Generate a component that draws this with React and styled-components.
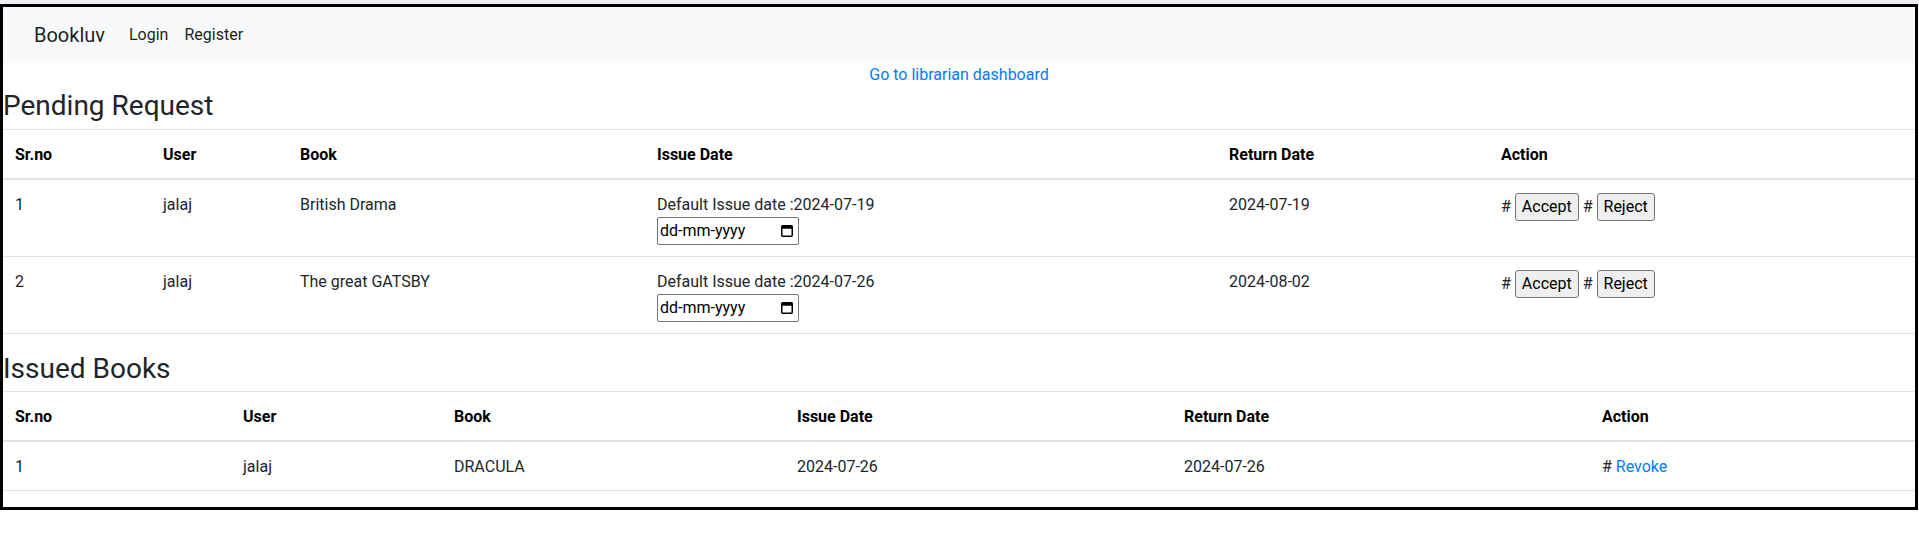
import React from 'react';
import styled, { createGlobalStyle } from 'styled-components';

const GlobalStyle = createGlobalStyle`
  body {
    margin: 0;
    font-family: Roboto, "Liberation Sans", sans-serif;
    font-size: 16px;
    line-height: 1.5;
    color: #212529;
    background: #fff;
  }
`;

const Page = styled.div`
  border-top: 4px solid #f1f0f7;
`;
const Frame = styled.div`
  width: 1918px;
  box-sizing: border-box;
  border: 3px solid #000;
`;
const Navbar = styled.nav`
  background-color: #f8f9fa;
  padding: 8px 16px;
`;
const NavInner = styled.div`
  display: flex;
  align-items: center;
  padding: 0 15px;
`;
const Brand = styled.a`
  font-size: 20px;
  line-height: 30px;
  padding: 5px 0;
  margin-right: 16px;
  color: rgba(0, 0, 0, 0.9);
  text-decoration: none;
`;
const NavLink = styled.a`
  padding: 8px;
  color: rgba(0, 0, 0, 0.9);
  text-decoration: none;
`;
const Center = styled.div`
  text-align: center;
`;
const BlueLink = styled.a`
  color: #007bff;
  text-decoration: none;
  cursor: pointer;
`;
const Title = styled.h3`
  font-size: 28px;
  font-weight: 400;
  line-height: 1.2;
  margin: 0 0 6px;
  padding-top: 2px;
`;
const Table = styled.table`
  width: 100%;
  table-layout: fixed;
  border-collapse: collapse;
  margin-bottom: 16px;
`;
const Th = styled.th`
  box-sizing: border-box;
  width: ${(p) => p.w}px;
  padding: 13px 12px 11px;
  text-align: left;
  vertical-align: bottom;
  font-weight: 700;
  color: #000;
  border-top: 1px solid #dee2e6;
  border-bottom: 2px solid #dee2e6;
`;
const Td = styled.td`
  padding: 13px 12px 11px;
  vertical-align: top;
  border-top: 1px solid #dee2e6;
  border-bottom: 1px solid #dee2e6;
`;
const DateBox = styled.label`
  display: flex;
  align-items: center;
  justify-content: space-between;
  width: 142px;
  height: 28px;
  box-sizing: border-box;
  padding: 0 5px 0 2px;
  border: 1px solid #767676;
  border-radius: 2px;
  color: #000;
`;
const Button = styled.button`
  font-family: inherit;
  font-size: 16px;
  line-height: 24px;
  padding: 1px 6px;
  color: #000;
  background: #efefef;
  border: 1px solid #767676;
  border-radius: 3px;
`;

const CalendarIcon = () => (
  <svg width="12" height="12" viewBox="0 0 12 12">
    <rect x="0.75" y="0.75" width="10.5" height="10.5" rx="1" fill="none" stroke="#000" strokeWidth="1.5" />
    <rect x="0.75" y="0.75" width="10.5" height="3" fill="#000" />
  </svg>
);

const pending = [
  { id: 1, user: 'jalaj', book: 'British Drama', issue: '2024-07-19', ret: '2024-07-19' },
  { id: 2, user: 'jalaj', book: 'The great GATSBY', issue: '2024-07-26', ret: '2024-08-02' },
];
const issued = [
  { id: 1, user: 'jalaj', book: 'DRACULA', issue: '2024-07-26', ret: '2024-07-26' },
];

const App = () => (
  <Page>
    <GlobalStyle />
    <Frame>
      <Navbar>
        <NavInner>
          <Brand>Bookluv</Brand>
          <NavLink>Login</NavLink>
          <NavLink>Register</NavLink>
        </NavInner>
      </Navbar>
      <Center>
        <BlueLink>Go to librarian dashboard</BlueLink>
      </Center>

      <Title>Pending Request</Title>
      <Table>
        <thead>
          <tr>
            <Th w={148}>Sr.no</Th>
            <Th w={137}>User</Th>
            <Th w={357}>Book</Th>
            <Th w={572}>Issue Date</Th>
            <Th w={272}>Return Date</Th>
            <Th>Action</Th>
          </tr>
        </thead>
        <tbody>
          {pending.map((r) => (
            <tr key={r.id}>
              <Td>{r.id}</Td>
              <Td>{r.user}</Td>
              <Td>{r.book}</Td>
              <Td>
                Default Issue date :{r.issue}
                <DateBox>
                  <span>dd-mm-yyyy</span>
                  <CalendarIcon />
                </DateBox>
              </Td>
              <Td>{r.ret}</Td>
              <Td>
                #{' '}
                <Button>Accept</Button>
                {' '}#{' '}
                <Button>Reject</Button>
              </Td>
            </tr>
          ))}
        </tbody>
      </Table>

      <Title>Issued Books</Title>
      <Table>
        <thead>
          <tr>
            <Th w={228}>Sr.no</Th>
            <Th w={211}>User</Th>
            <Th w={343}>Book</Th>
            <Th w={387}>Issue Date</Th>
            <Th w={418}>Return Date</Th>
            <Th>Action</Th>
          </tr>
        </thead>
        <tbody>
          {issued.map((r) => (
            <tr key={r.id}>
              <Td>{r.id}</Td>
              <Td>{r.user}</Td>
              <Td>{r.book}</Td>
              <Td>{r.issue}</Td>
              <Td>{r.ret}</Td>
              <Td>
                #{' '}
                <BlueLink>Revoke</BlueLink>
              </Td>
            </tr>
          ))}
        </tbody>
      </Table>
    </Frame>
  </Page>
);

export default App;
